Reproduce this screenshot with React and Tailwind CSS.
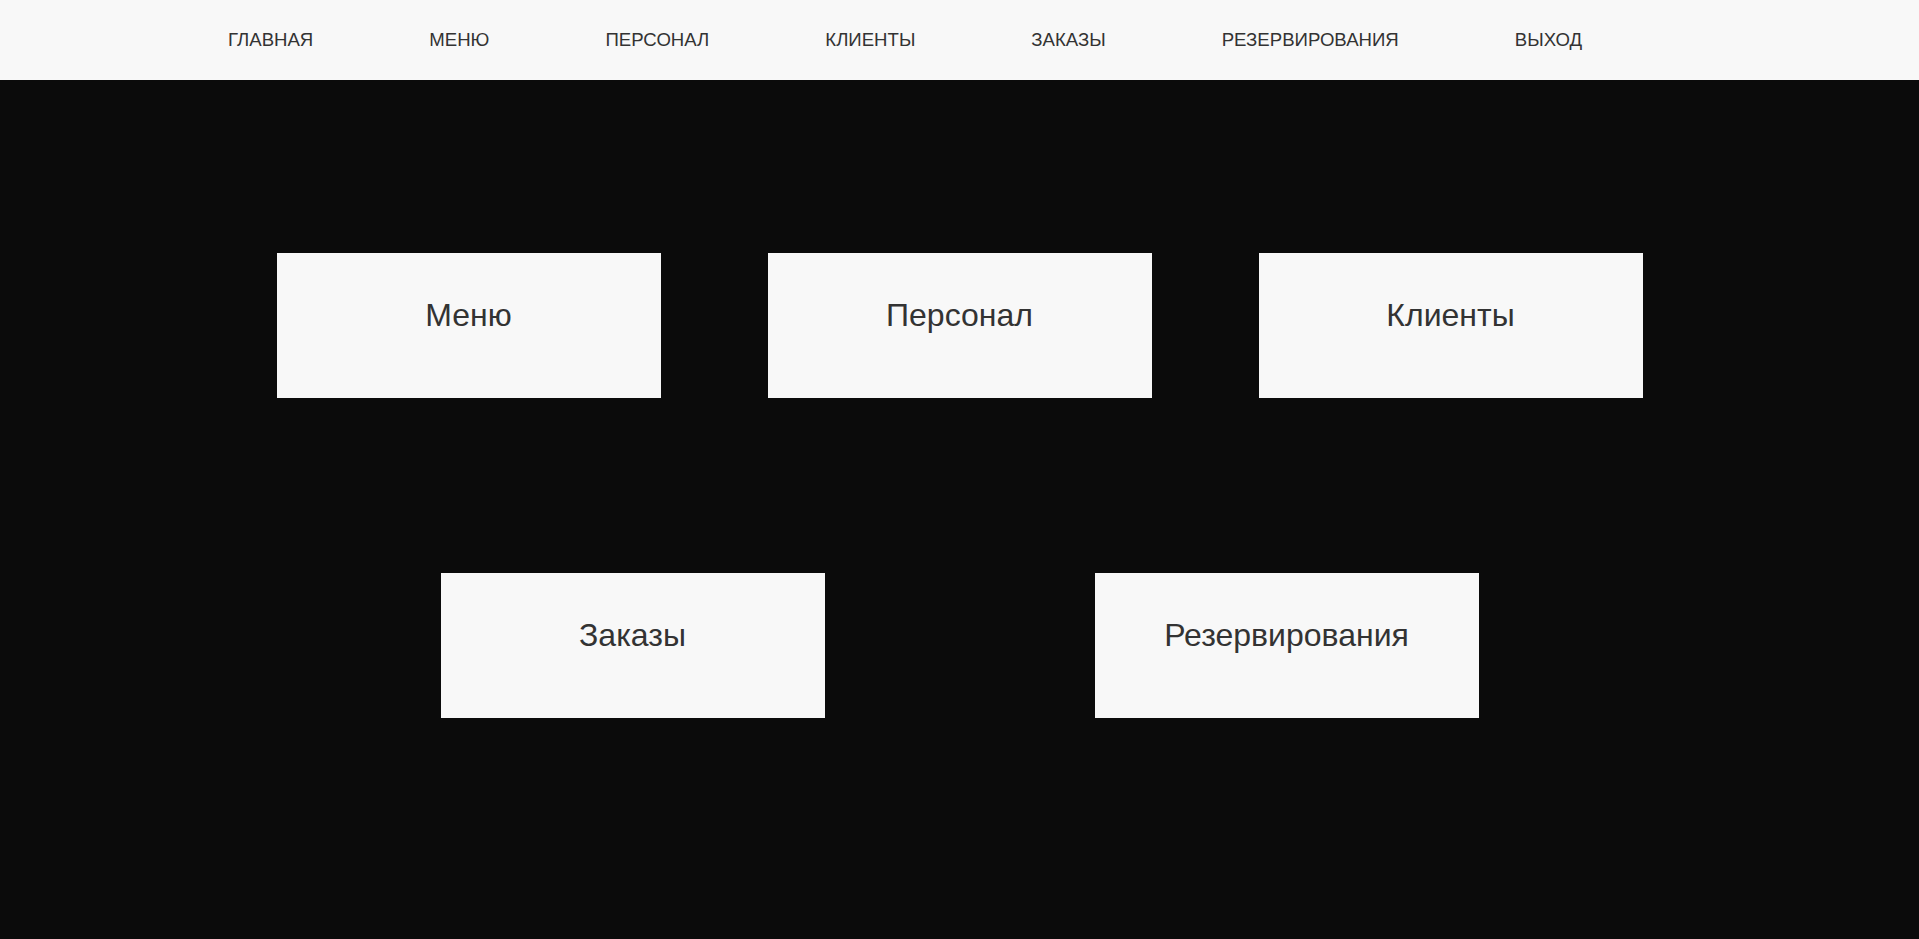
const navItems = ['ГЛАВНАЯ', 'МЕНЮ', 'ПЕРСОНАЛ', 'КЛИЕНТЫ', 'ЗАКАЗЫ', 'РЕЗЕРВИРОВАНИЯ', 'ВЫХОД'];

const topRow = ['Меню', 'Персонал', 'Клиенты'];
const bottomRow = ['Заказы', 'Резервирования'];

const Card = ({ title }) => (
  <a
    href="#"
    className="block w-[384px] h-[145px] bg-[#f8f8f8] pt-[44px] text-center text-[32px] leading-[37px] text-[#333333]"
  >
    {title}
  </a>
);

const App = () => {
  return (
    <div className="min-h-screen flex flex-col bg-[#0b0b0b] font-['Liberation_Sans',Arial,sans-serif]">
      <header className="h-[80px] bg-[#f8f8f8] flex items-center">
        <nav className="flex items-center gap-[116px] pl-[228px]">
          {navItems.map((item) => (
            <a key={item} href="#" className="text-[18.6px] leading-[20px] text-[#333333]">
              {item}
            </a>
          ))}
        </nav>
      </header>

      <main className="flex-1 flex flex-col items-center pt-[173px] gap-[175px]">
        <div className="flex gap-[107px]">
          {topRow.map((t) => (
            <Card key={t} title={t} />
          ))}
        </div>
        <div className="flex gap-[270px]">
          {bottomRow.map((t) => (
            <Card key={t} title={t} />
          ))}
        </div>
      </main>
    </div>
  );
};

export default App;
